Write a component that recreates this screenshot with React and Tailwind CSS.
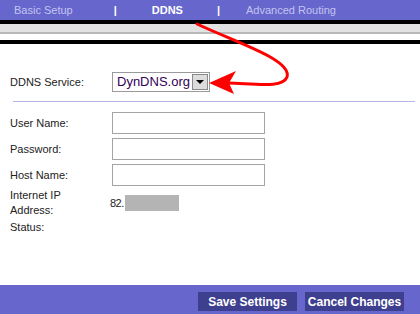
import React from "react";

const Field = ({ label }) => (
  <div className="flex items-center h-[22px]">
    <div className="w-[112px] pl-[10px]">{label}</div>
    <input
      type="text"
      className="w-[153px] h-[22px] border border-[#a4a4a4] bg-white outline-none"
    />
  </div>
);

export default function App() {
  return (
    <div className="relative w-[420px] h-[314px] overflow-hidden bg-white flex flex-col text-[11px] text-[#222] font-['Liberation_Sans',Arial,sans-serif]">
      {/* tabs */}
      <div className="h-[20px] bg-[#6666cc] flex items-center text-[11px]">
        <span className="ml-[14px] text-[#c4c4f0]">Basic Setup</span>
        <span className="ml-[41px] text-white font-bold">|</span>
        <span className="ml-[35px] text-white font-bold">DDNS</span>
        <span className="ml-[34px] text-white font-bold">|</span>
        <span className="ml-[26px] text-[#c4c4f0]">Advanced Routing</span>
      </div>
      <div className="h-[4px] bg-black" />
      <div className="h-[8px] bg-[#e2e2e2]" />
      <div className="h-[2px] bg-[#b8b8b8]" />
      <div className="h-[6px] bg-white" />
      <div className="h-[4px] bg-black" />

      {/* content */}
      <div className="flex-1 flex flex-col">
        <div className="mt-[28px] flex items-center h-[20px]">
          <div className="w-[112px] pl-[10px]">DDNS Service:</div>
          <div className="w-[98px] h-[20px] border border-[#9a9a9a] flex items-center justify-between pl-[4px] pr-[1px]">
            <span className="text-[13px] text-[#33005a]">DynDNS.org</span>
            <span className="w-[16px] h-[16px] bg-[#dcdcdc] border border-[#8a8a8a] flex items-center justify-center">
              <span className="w-0 h-0 border-l-[4px] border-r-[4px] border-t-[4px] border-l-transparent border-r-transparent border-t-black" />
            </span>
          </div>
        </div>
        <div className="mt-[9px] ml-[13px] mr-[5px] h-px bg-[#b6b6e6]" />

        <div className="mt-[10px] flex flex-col gap-[4px]">
          <Field label="User Name:" />
          <Field label="Password:" />
          <Field label="Host Name:" />
        </div>

        <div className="mt-[2px] flex items-center h-[30px]">
          <div className="w-[110px] pl-[10px] leading-[15px]">
            Internet IP
            <br />
            Address:
          </div>
          <span className="tracking-[-0.5px]">82.</span>
          <span className="ml-[1px] w-[54px] h-[16px] bg-[#b4b4b4]" />
        </div>
        <div className="mt-[2px] pl-[10px] h-[14px] leading-[14px]">Status:</div>
      </div>

      {/* footer */}
      <div className="h-[29px] bg-[#6666cc] flex items-start justify-end pt-[7px] pr-[16px] gap-[8px]">
        <button className="w-[99px] h-[19px] bg-[#3f3f8f] text-white font-bold text-[12px]">
          Save Settings
        </button>
        <button className="w-[99px] h-[19px] bg-[#3f3f8f] text-white font-bold text-[12px]">
          Cancel Changes
        </button>
      </div>

      {/* red annotation arrow */}
      <svg
        className="absolute left-0 top-0 pointer-events-none"
        width="420"
        height="314"
        viewBox="0 0 420 314"
      >
        <path
          d="M197 24 C 240 44, 292 60, 287 77 C 283 88, 258 84, 228 83"
          fill="none"
          stroke="#ff0000"
          strokeWidth="3"
          strokeLinecap="round"
        />
        <polygon points="209,83 236,71 229,83 234,94" fill="#ff0000" />
      </svg>
    </div>
  );
}
